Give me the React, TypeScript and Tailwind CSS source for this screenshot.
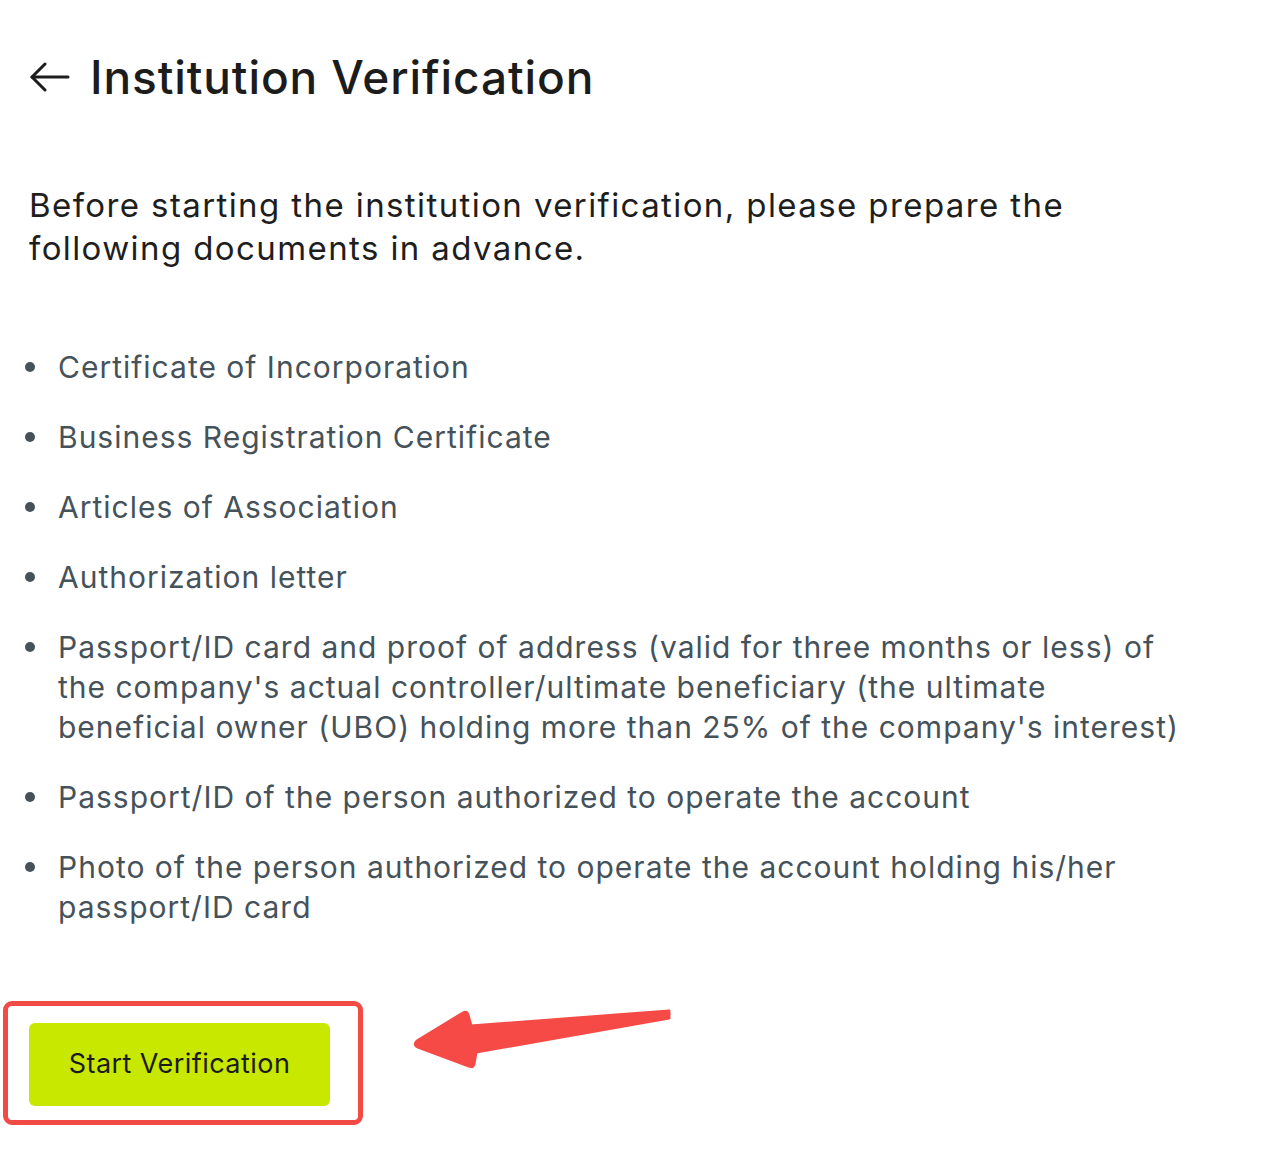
import React from 'react';

const items: string[][] = [
	['Certificate of Incorporation'],
	['Business Registration Certificate'],
	['Articles of Association'],
	['Authorization letter'],
	[
		'Passport/ID card and proof of address (valid for three months or less) of',
		"the company's actual controller/ultimate beneficiary (the ultimate",
		"beneficial owner (UBO) holding more than 25% of the company's interest)",
	],
	['Passport/ID of the person authorized to operate the account'],
	['Photo of the person authorized to operate the account holding his/her', 'passport/ID card'],
];

const App = () => {
	return (
		<div className="w-[1280px] h-[1176px] bg-white font-['Inter','Open_Sans',sans-serif]">
			<div className="flex flex-row items-center pl-[30px] pt-[54px]">
				<svg width="40" height="30" viewBox="0 0 40 30" fill="none" stroke="#1c1c1c" strokeWidth="3" strokeLinecap="round" strokeLinejoin="round">
					<path d="M2 15H38" />
					<path d="M15 2 2 15 15 28" />
				</svg>
				<h1 className="pl-[20px] text-[46px] leading-[46px] tracking-[0.9px] font-medium text-[#1c1c1c]">Institution Verification</h1>
			</div>

			<p className="pl-[29px] pt-[84px] text-[33px] leading-[43px] tracking-[1.4px] text-[#1e1e1e]">
				Before starting the institution verification, please prepare the
				<br />
				following documents in advance.
			</p>

			<ul className="pl-[25px] pt-[77px] flex flex-col gap-[30px]">
				{items.map((lines, i) => (
					<li key={i} className="flex flex-row">
						<div className="w-[33px] h-[40px] flex items-center">
							<span className="w-[10px] h-[10px] rounded-full bg-[#46525a]" />
						</div>
						<p className="text-[30px] leading-[40px] tracking-[1px] text-[#46525a]">
							{lines.map((l, j) => (
								<React.Fragment key={j}>
									{j > 0 && <br />}
									{l}
								</React.Fragment>
							))}
						</p>
					</li>
				))}
			</ul>

			<div className="flex flex-row items-start pt-[74px] pl-[3px]">
				<div className="border-[5px] border-[#f24b46] rounded-[9px] pl-[21px] pt-[17px] pr-[28px] pb-[14px]">
					<button className="w-[301px] h-[83px] rounded-[6px] bg-[#c8e800] text-[27px] tracking-[0.45px] text-[#1b1b1b]">
						Start Verification
					</button>
				</div>
				<svg className="ml-[45px]" width="266" height="72" viewBox="0 0 266 72">
					<path
						d="M261 10 L261 17 L68 51 L66 63 Q65 67 61 65 L10 46 Q5 44 9 40 L55 12 Q59 10 60 14 L63 25 Z"
						fill="#f54a46"
						stroke="#f54a46"
						strokeWidth="3"
						strokeLinejoin="round"
					/>
				</svg>
			</div>
		</div>
	);
};

export default App;
